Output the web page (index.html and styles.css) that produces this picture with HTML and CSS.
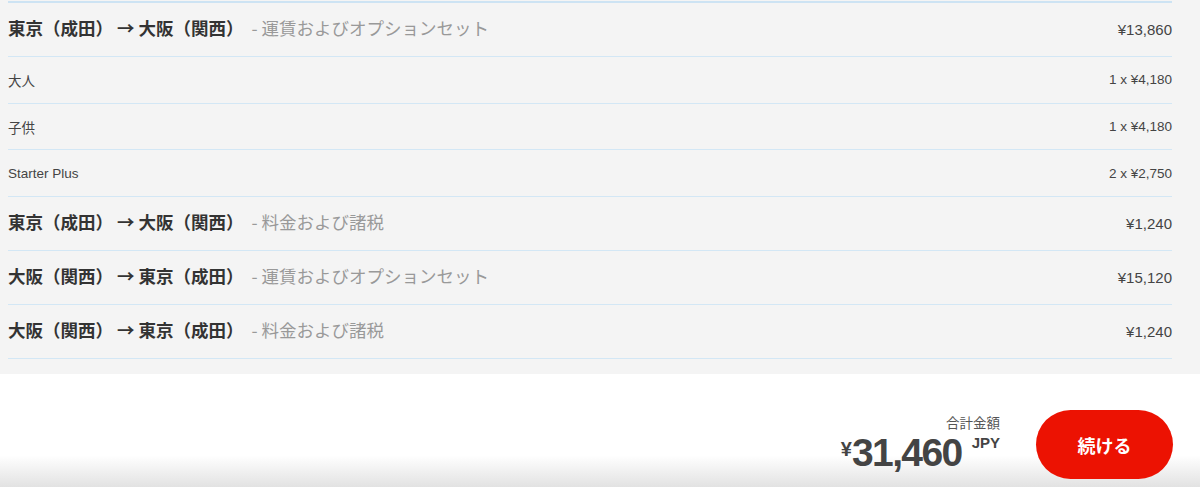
FILE: index.html
```html
<!DOCTYPE html>
<html lang="ja">
<head>
<meta charset="utf-8">
<link rel="stylesheet" href="styles.css">
</head>
<body>
<section class="breakdown">
  <div class="list">
    <div class="row main">
      <div class="label"><strong>東京（成田） → 大阪（関西）</strong><span class="sub">- 運賃およびオプションセット</span></div>
      <div class="amount">¥13,860</div>
    </div>
    <div class="row minor">
      <div class="label">大人</div>
      <div class="amount">1 x ¥4,180</div>
    </div>
    <div class="row minor">
      <div class="label">子供</div>
      <div class="amount">1 x ¥4,180</div>
    </div>
    <div class="row minor">
      <div class="label">Starter Plus</div>
      <div class="amount">2 x ¥2,750</div>
    </div>
    <div class="row main">
      <div class="label"><strong>東京（成田） → 大阪（関西）</strong><span class="sub">- 料金および諸税</span></div>
      <div class="amount">¥1,240</div>
    </div>
    <div class="row main">
      <div class="label"><strong>大阪（関西） → 東京（成田）</strong><span class="sub">- 運賃およびオプションセット</span></div>
      <div class="amount">¥15,120</div>
    </div>
    <div class="row main">
      <div class="label"><strong>大阪（関西） → 東京（成田）</strong><span class="sub">- 料金および諸税</span></div>
      <div class="amount">¥1,240</div>
    </div>
  </div>
</section>
<footer class="footer">
  <div class="total">
    <div class="total-label">合計金額</div>
    <div class="total-amount"><span class="yen">¥</span><span class="num">31,460</span><span class="cur">JPY</span></div>
  </div>
  <button class="continue">続ける</button>
</footer>
</body>
</html>
```

FILE: styles.css
```css
* { box-sizing: border-box; }
html, body { margin: 0; padding: 0; }
body {
  width: 1200px;
  height: 487px;
  overflow: hidden;
  font-family: "Liberation Sans", "Noto Sans CJK JP", sans-serif;
  color: #333;
  background: #fff;
}
.breakdown {
  background: #f4f4f4;
  padding: 1px 28px 15px 8px;
}
.list {
  border-top: 2px solid #cde3f3;
}
.row {
  display: flex;
  align-items: center;
  justify-content: space-between;
  border-bottom: 1px solid #d3e7f5;
}
.row.main { height: 54px; }
.row.minor { height: 46.7px; }
.row.main .label {
  font-family: "Noto Sans CJK JP", "Liberation Sans", sans-serif;
  font-size: 17.5px;
  white-space: nowrap;
  margin-bottom: 4px;
}
.row.main .label strong {
  font-weight: 700;
  color: #333;
}
.row.main .label .sub {
  color: #999;
  font-weight: 400;
  margin-left: 8px;
}
.row.main .amount {
  font-size: 15px;
  color: #444;
}
.row.minor .label {
  font-size: 13.5px;
  color: #444;
}
.row.minor .amount {
  font-size: 13.5px;
  color: #444;
}
.footer {
  height: 113px;
  display: flex;
  align-items: flex-start;
  justify-content: flex-end;
  padding: 0 27px 0 0;
  gap: 36px;
  background: linear-gradient(to bottom, #ffffff 0, #ffffff 72%, #e2e2e2 100%);
}
.total {
  display: flex;
  flex-direction: column;
  align-items: flex-end;
  margin-top: 41px;
}
.total-label {
  font-family: "Noto Sans CJK JP", sans-serif;
  font-size: 13.5px;
  color: #555;
  line-height: 15px;
  margin-bottom: 3px;
}
.total-amount {
  display: flex;
  align-items: flex-start;
  color: #444;
  font-weight: 700;
  font-family: "Liberation Sans", sans-serif;
}
.total-amount .yen {
  font-size: 20px;
  line-height: 1;
  margin-top: 6px;
}
.total-amount .num {
  font-size: 39px;
  line-height: 40px;
  letter-spacing: -1.6px;
}
.total-amount .cur {
  font-size: 15px;
  line-height: 1;
  margin-left: 10px;
  margin-top: 2px;
}
.continue {
  width: 137px;
  height: 69px;
  margin-top: 36px;
  border: 0;
  border-radius: 35px;
  background: #ec1202;
  color: #fff;
  font-family: "Noto Sans CJK JP", sans-serif;
  font-size: 18px;
  font-weight: 700;
  padding: 0;
}
```
